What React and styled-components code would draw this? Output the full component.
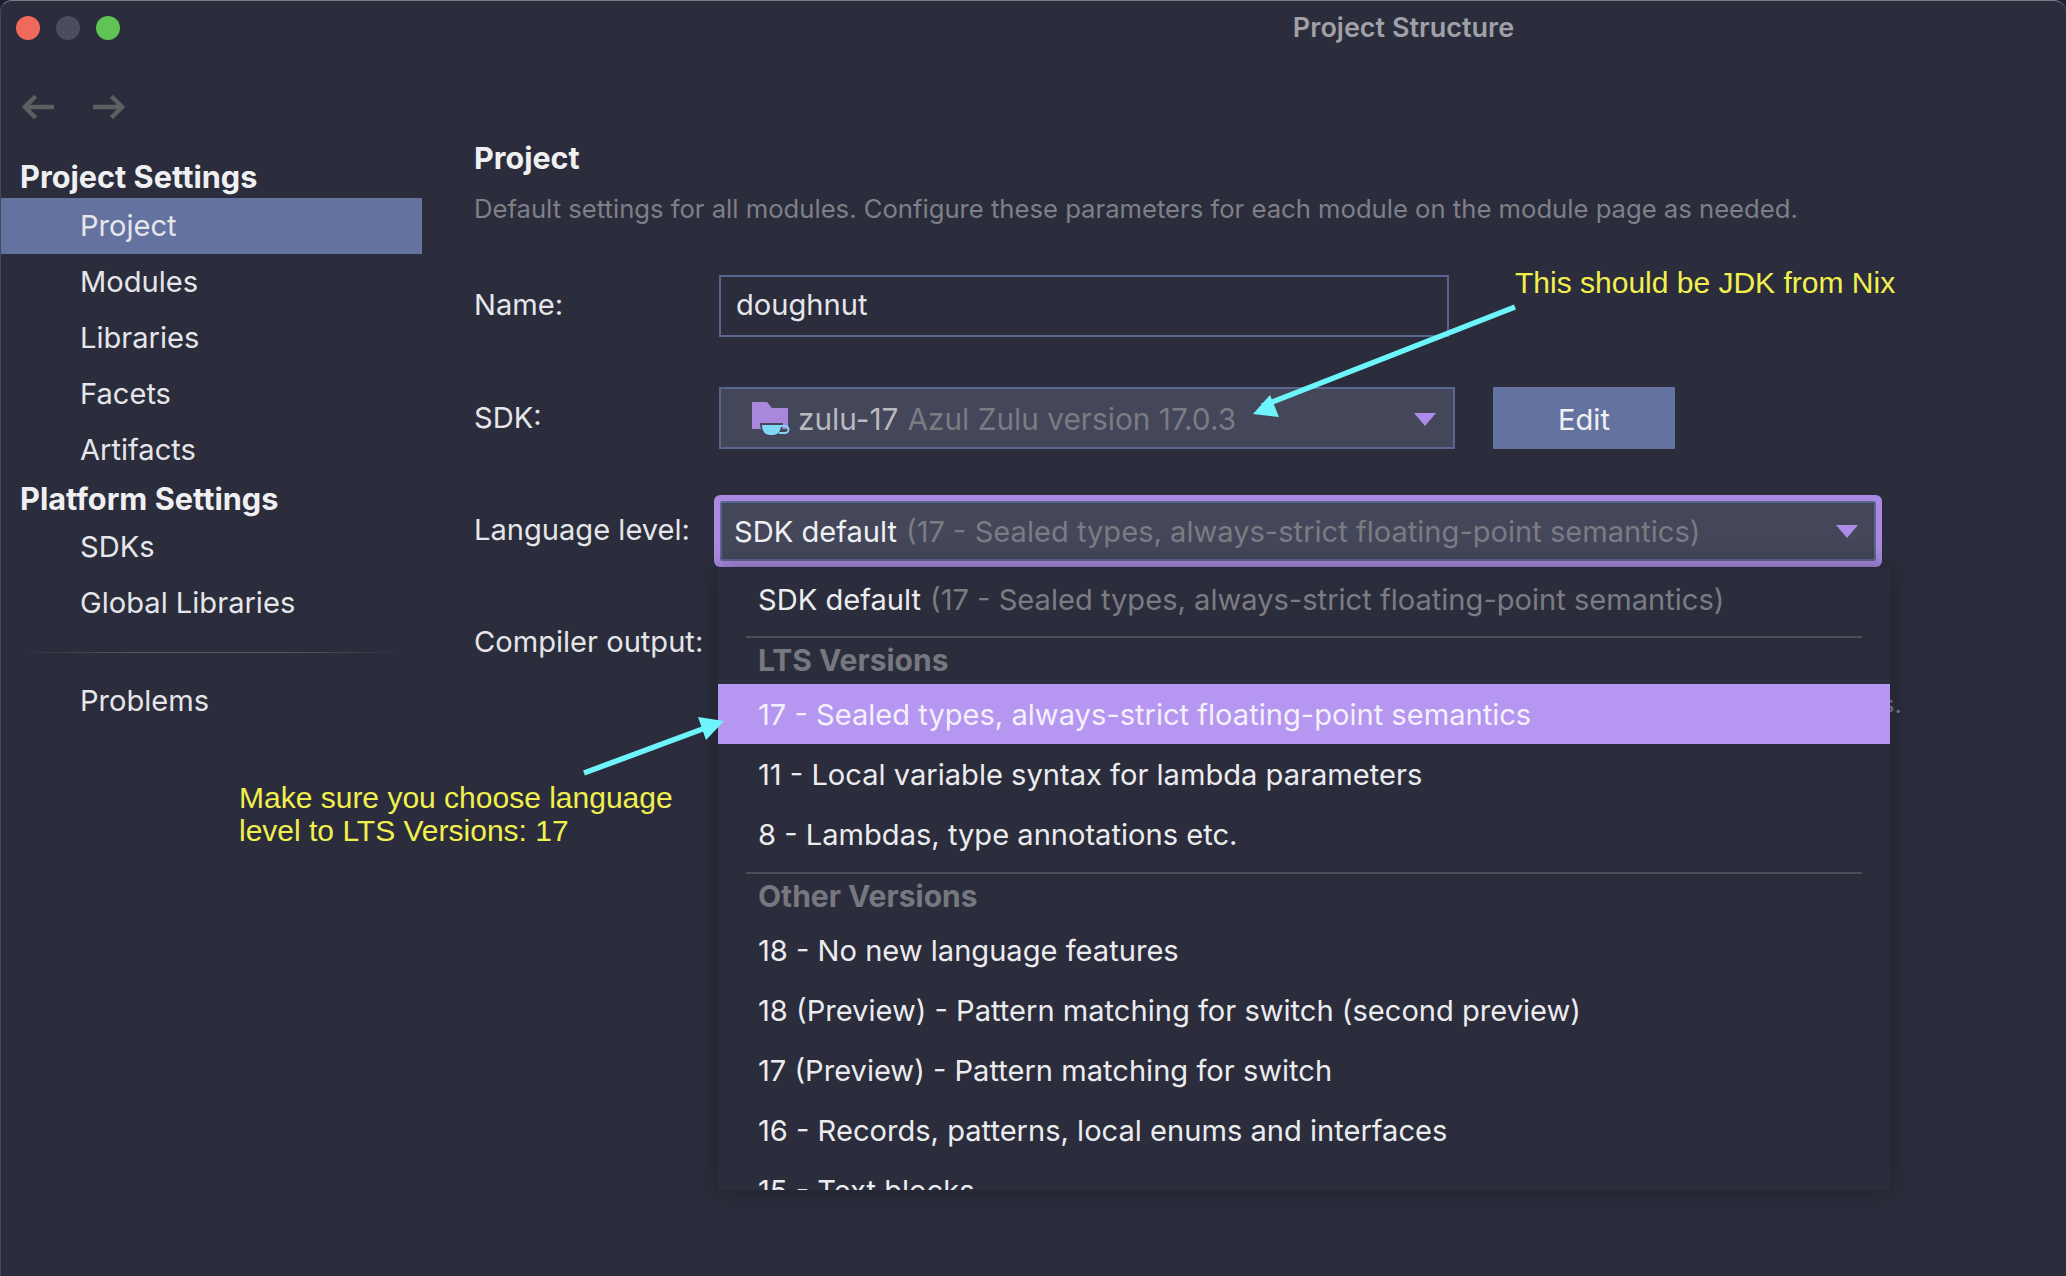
import React from 'react';
import styled, { createGlobalStyle } from 'styled-components';

const GlobalStyle = createGlobalStyle`
  html, body {
    margin: 0;
    padding: 0;
    background: #1c2030;
  }
`;

const Window = styled.div`
  position: relative;
  width: 2066px;
  height: 1276px;
  overflow: hidden;
  box-sizing: border-box;
  background: #2b2d3c;
  border-top: 1px solid #7d808a;
  border-left: 1px solid #45485a;
  border-radius: 12px 12px 0 0;
  font-family: Inter, "Noto Sans", sans-serif;
  font-size: 29.1px;
  color: #e6e6ea;
`;

const TitleBar = styled.div`
  position: relative;
  height: 55px;
  display: flex;
  align-items: center;
  justify-content: center;
  padding: 0 0 3px 740px;
  box-sizing: border-box;
  color: #a0a0a6;
  font-size: 27px;
  font-weight: 600;
`;

const Lights = styled.div`
  position: absolute;
  left: 15px;
  top: 15px;
  display: flex;
  gap: 16px;
`;

const Light = styled.span`
  width: 24px;
  height: 24px;
  border-radius: 50%;
  background: ${(p) => p.$color};
`;

const Columns = styled.div`
  display: flex;
`;

const Sidebar = styled.aside`
  width: 421px;
  flex: none;
`;

const Nav = styled.div`
  height: 98px;
  display: flex;
  align-items: center;
  gap: 37px;
  padding: 4px 0 0 21px;
  box-sizing: border-box;
`;

const SectionTitle = styled.div`
  height: ${(p) => p.$height}px;
  box-sizing: border-box;
  display: flex;
  align-items: center;
  padding: ${(p) => p.$pad || 0}px 0 0 19px;
  font-size: 30.7px;
  font-weight: 700;
  color: #f0f0f2;
`;

const SideItem = styled.div`
  height: 56px;
  box-sizing: border-box;
  display: flex;
  align-items: center;
  padding: 0 0 2px 79px;
  background: ${(p) => (p.$active ? '#6472a0' : 'transparent')};
`;

const SideDivider = styled.div`
  height: 1px;
  margin: 21px 16px 20px 16px;
  background: linear-gradient(90deg, #2b2d3c, #55575f 30%, #55575f 70%, #2b2d3c);
`;

const Main = styled.main`
  flex: 1;
  padding: 84px 0 0 52px;
`;

const Heading = styled.h2`
  margin: 0;
  height: 36px;
  line-height: 36px;
  font-size: 30.5px;
  font-weight: 700;
  color: #f0f0f2;
`;

const Description = styled.p`
  margin: 15px 0 48px;
  height: 36px;
  line-height: 36px;
  font-size: 25.65px;
  color: #7f8087;
`;

const FormRow = styled.div`
  display: flex;
  align-items: center;
  height: ${(p) => p.$height || 62}px;
  margin-bottom: ${(p) => p.$gap ?? 50}px;
`;

const Label = styled.label`
  width: 245px;
  flex: none;
  padding-bottom: ${(p) => p.$lift ?? 3}px;
`;

const TextInput = styled.div`
  width: 730px;
  height: 62px;
  box-sizing: border-box;
  display: flex;
  align-items: center;
  padding: 0 0 3px 15px;
  border: 2px solid #5a6690;
  background: #2b2d3c;
`;

const SdkSelect = styled.div`
  width: 736px;
  height: 62px;
  box-sizing: border-box;
  display: flex;
  align-items: center;
  padding: 2px 17px 0 30px;
  border: 2px solid #5a6690;
  background: #44465a;
  color: #b9b9be;
  font-size: 29.8px;
`;

const Hint = styled.span`
  color: #7b7c82;
  margin-left: 9px;
`;

const Caret = styled.span`
  margin-left: auto;
  width: 0;
  height: 0;
  border-left: 11px solid transparent;
  border-right: 11px solid transparent;
  border-top: 13px solid #ab8ce6;
`;

const EditButton = styled.button`
  margin-left: 38px;
  width: 182px;
  height: 62px;
  border: 0;
  padding: 2px 0 0;
  background: #6472a0;
  box-shadow: 0 5px 0 #292b38;
  color: #f0f0f4;
  font: inherit;
`;

const LanguageWrap = styled.div`
  position: relative;
  z-index: 2;
  margin-left: 1px;
`;

const LanguageField = styled.div`
  width: 1156px;
  height: 60px;
  box-sizing: border-box;
  display: flex;
  align-items: center;
  padding: 0 16px 0 12px;
  border: 2px solid #5a6690;
  border-radius: 2px;
  background: #44465a;
  box-shadow: 0 0 0 6px #a98ae0;
  color: #f0f0f2;
`;

const Popup = styled.div`
  position: absolute;
  top: 67px;
  left: -2px;
  width: 1172px;
  height: 622px;
  overflow: hidden;
  padding-top: 1px;
  box-sizing: border-box;
  background: #2b2d3c;
  box-shadow: 0 0 22px rgba(18, 19, 28, 0.45);
  color: #ececef;
`;

const Option = styled.div`
  height: 60px;
  display: flex;
  align-items: center;
  padding-left: 40px;
  white-space: nowrap;
  background: ${(p) => (p.$selected ? '#b596f0' : 'transparent')};
  color: ${(p) => (p.$selected ? '#f4f0fc' : 'inherit')};
`;

const PopupDivider = styled.div`
  height: 2px;
  margin: ${(p) => p.$top}px 28px 0;
  background: #4e4f58;
`;

const GroupTitle = styled.div`
  height: ${(p) => p.$height}px;
  box-sizing: border-box;
  display: flex;
  align-items: center;
  padding: 0 0 ${(p) => p.$lift}px 40px;
  font-size: 30px;
  font-weight: 700;
  color: #77787f;
`;

const OutputHint = styled.div`
  margin: 15px 0 0 245px;
  width: 1183px;
  text-align: right;
  font-size: 25.65px;
  color: #7f8087;
`;

const Callout = styled.div`
  position: absolute;
  left: ${(p) => p.$x}px;
  top: ${(p) => p.$y}px;
  z-index: 4;
  font-family: "Liberation Sans", Arial, sans-serif;
  font-size: 30px;
  line-height: 33px;
  color: #f2f04e;
  white-space: pre;
`;

const Overlay = styled.svg`
  position: absolute;
  left: -1px;
  top: -1px;
  z-index: 3;
  pointer-events: none;
`;

const NavArrow = ({ flip }) => (
  <svg width="33" height="26" viewBox="0 0 34 26" style={flip ? { transform: 'scaleX(-1)' } : undefined}>
    <path d="M33 13H3M14 2L3 13l11 11" fill="none" stroke="#5e5f63" strokeWidth="4.5" />
  </svg>
);

const JdkIcon = () => (
  <svg width="40" height="36" viewBox="0 0 40 36" style={{ marginRight: 7, flex: 'none' }}>
    <path d="M1 1h15l5 6h16v21H1z" fill="#a987dc" />
    <path d="M9 22h23c0 8-4 13-11 13h-2C13 35 9 30 9 22z" fill="#44465a" />
    <path d="M11 24h19c0 6-3 10-8 10h-3c-5 0-8-4-8-10z" fill="#7fd8f6" />
    <path d="M30 25h4a3 3 0 0 1 0 7h-6" fill="none" stroke="#7fd8f6" strokeWidth="2" />
  </svg>
);

const Page = () => {
  return (
    <Window>
      <TitleBar>
        <Lights>
          <Light $color="#f0695c" />
          <Light $color="#4a4d5c" />
          <Light $color="#5fc454" />
        </Lights>
        Project Structure
      </TitleBar>
      <Columns>
        <Sidebar>
          <Nav>
            <NavArrow />
            <NavArrow flip />
          </Nav>
          <SectionTitle $height={44} $pad={1}>Project Settings</SectionTitle>
          <SideItem $active>Project</SideItem>
          <SideItem>Modules</SideItem>
          <SideItem>Libraries</SideItem>
          <SideItem>Facets</SideItem>
          <SideItem>Artifacts</SideItem>
          <SectionTitle $height={41}>Platform Settings</SectionTitle>
          <SideItem>SDKs</SideItem>
          <SideItem>Global Libraries</SideItem>
          <SideDivider />
          <SideItem>Problems</SideItem>
        </Sidebar>
        <Main>
          <Heading>Project</Heading>
          <Description>Default settings for all modules. Configure these parameters for each module on the module page as needed.</Description>
          <FormRow>
            <Label>Name:</Label>
            <TextInput>doughnut</TextInput>
          </FormRow>
          <FormRow $gap={52}>
            <Label $lift={2}>SDK:</Label>
            <SdkSelect>
              <JdkIcon />
              zulu-17<Hint>Azul Zulu version 17.0.3</Hint>
              <Caret />
            </SdkSelect>
            <EditButton>Edit</EditButton>
          </FormRow>
          <FormRow $height={60}>
            <Label>Language level:</Label>
            <LanguageWrap>
              <LanguageField>
                SDK default<Hint>(17 - Sealed types, always-strict floating-point semantics)</Hint>
                <Caret />
              </LanguageField>
              <Popup>
                <Option>SDK default<Hint>(17 - Sealed types, always-strict floating-point semantics)</Hint></Option>
                <PopupDivider $top={7} />
                <GroupTitle $height={46} $lift={3}>LTS Versions</GroupTitle>
                <Option $selected>17 - Sealed types, always-strict floating-point semantics</Option>
                <Option>11 - Local variable syntax for lambda parameters</Option>
                <Option>8 - Lambdas, type annotations etc.</Option>
                <PopupDivider $top={8} />
                <GroupTitle $height={46} $lift={3}>Other Versions</GroupTitle>
                <Option>18 - No new language features</Option>
                <Option>18 (Preview) - Pattern matching for switch (second preview)</Option>
                <Option>17 (Preview) - Pattern matching for switch</Option>
                <Option>16 - Records, patterns, local enums and interfaces</Option>
                <Option>15 - Text blocks</Option>
              </Popup>
            </LanguageWrap>
          </FormRow>
          <FormRow $gap={0}>
            <Label $lift={1}>Compiler output:</Label>
          </FormRow>
          <OutputHint>s.</OutputHint>
        </Main>
      </Columns>
      <Callout $x={1514} $y={265}>This should be JDK from Nix</Callout>
      <Callout $x={238} $y={780}>{'Make sure you choose language\nlevel to LTS Versions: 17'}</Callout>
      <Overlay width="2066" height="1276" viewBox="0 0 2066 1276">
        <line x1="1515" y1="307" x2="1262" y2="406" stroke="#6df5fb" strokeWidth="5.5" />
        <polygon points="1253,414 1270,395 1279,417" fill="#6df5fb" />
        <line x1="584" y1="773" x2="708" y2="727" stroke="#6df5fb" strokeWidth="5.5" />
        <polygon points="724,721 698,717 706,740" fill="#6df5fb" />
      </Overlay>
    </Window>
  );
};

const App = () => (
  <>
    <GlobalStyle />
    <Page />
  </>
);

export default App;
